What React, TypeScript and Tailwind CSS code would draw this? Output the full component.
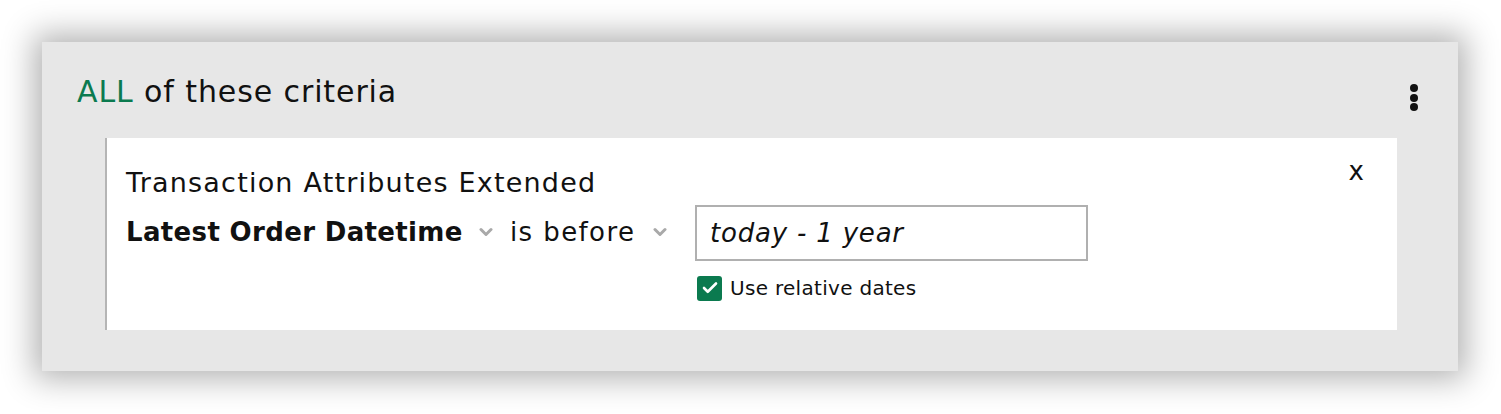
import { Check } from "lucide-react"

function Caret() {
  return (
    <svg width="14" height="10" viewBox="0 0 14 10" className="shrink-0">
      <polyline points="2,2.5 7,7.5 12,2.5" fill="none" stroke="#a9a9a9" strokeWidth="3" strokeLinecap="round" strokeLinejoin="round" />
    </svg>
  )
}

export default function App() {
  return (
    <div className="h-[414px] w-[1501px] bg-white pt-[42px] pl-[42px]" style={{ fontFamily: '"DejaVu Sans", sans-serif' }}>
      <div className="flex h-[329px] w-[1416px] flex-col bg-[#e7e7e7] shadow-[0_0_30px_8px_rgba(0,0,0,0.3)]">
        <div className="flex items-start justify-between pl-[35px] pr-[40px] pt-[29px]">
          <h2 className="text-[30px] leading-[42px] tracking-[0.9px] text-[#111]">
            <span className="text-[#0b7a4f]">ALL</span> of these criteria
          </h2>
          <button className="mt-[13px] flex flex-col gap-[1.5px]">
            <span className="h-[8px] w-[8px] rounded-full bg-[#111]" />
            <span className="h-[8px] w-[8px] rounded-full bg-[#111]" />
            <span className="h-[8px] w-[8px] rounded-full bg-[#111]" />
          </button>
        </div>

        <div className="mt-[25px] ml-[63px] flex h-[192px] w-[1292px] border-l-2 border-[#b5b5b5] bg-white">
          <div className="flex flex-1 flex-col pl-[19px] pt-[27px]">
            <div className="text-[27px] leading-[36px] tracking-[1.2px] text-[#111]">Transaction Attributes Extended</div>
            <div className="mt-[4px] flex items-start">
              <div className="flex h-[54px] items-center">
                <span className="w-[336px] whitespace-nowrap text-[26px] font-bold tracking-[0.35px] text-[#111]">Latest Order Datetime</span>
                <span className="ml-[17px]"><Caret /></span>
                <span className="ml-[17px] w-[126px] whitespace-nowrap text-[26px] tracking-[1.4px] text-[#111]">is before</span>
                <span className="ml-[17px]"><Caret /></span>
              </div>
              <div className="ml-[28px] flex flex-col">
                <div className="flex h-[56px] w-[393px] items-center border-2 border-[#b0b0b0] px-[13px]">
                  <span className="text-[26px] italic tracking-[0.8px] text-[#111]">today - 1 year</span>
                </div>
                <label className="mt-[12px] ml-[2px] flex items-center gap-[8px]">
                  <span className="flex h-[25px] w-[25px] items-center justify-center rounded-[3px] bg-[#0b7a4f]">
                    <Check className="h-[18px] w-[18px] text-white" strokeWidth={3.5} />
                  </span>
                  <span className="text-[20px] font-medium tracking-[0.3px] text-[#111]">Use relative dates</span>
                </label>
              </div>
            </div>
          </div>
          <div className="pr-[33px] pt-[20px]">
            <span className="text-[26px] leading-none text-[#111]">x</span>
          </div>
        </div>
      </div>
    </div>
  )
}
